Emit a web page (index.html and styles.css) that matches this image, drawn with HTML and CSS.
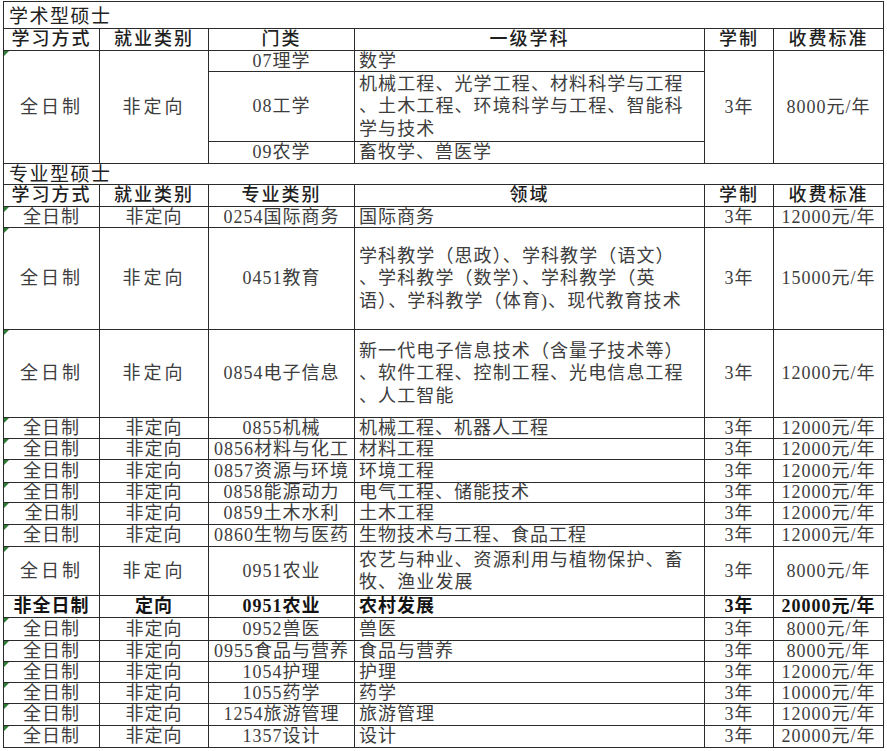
FILE: index.html
```html
<!DOCTYPE html>
<html lang="zh-CN">
<head>
<meta charset="utf-8">
<title>收费标准</title>
<link rel="stylesheet" href="styles.css">
</head>
<body>
<div class="sheet">
<table class="fee">
<colgroup><col class="c1"><col class="c2"><col class="c3"><col class="c4"><col class="c5"><col class="c6"></colgroup>
<tr class="h27"><td colspan="6" class="title">学术型硕士</td></tr>
<tr class="h22 head"><td>学习方式</td><td>就业类别</td><td>门类</td><td>一级学科</td><td>学制</td><td>收费标准</td></tr>
<tr class="h21"><td rowspan="3" class="mark sp">全日制</td><td rowspan="3" class="sp">非定向</td><td>07理学</td><td class="l">数学</td><td rowspan="3">3年</td><td rowspan="3">8000元/年</td></tr>
<tr class="h70"><td>08工学</td><td class="l multi">机械工程、光学工程、材料科学与工程<br>、土木工程、环境科学与工程、智能科<br>学与技术</td></tr>
<tr class="h22"><td>09农学</td><td class="l">畜牧学、兽医学</td></tr>
<tr class="h21"><td colspan="6" class="title t2">专业型硕士</td></tr>
<tr class="h22 head"><td>学习方式</td><td>就业类别</td><td>专业类别</td><td>领域</td><td>学制</td><td>收费标准</td></tr>
<tr class="h21"><td class="mark">全日制</td><td>非定向</td><td>0254国际商务</td><td class="l">国际商务</td><td>3年</td><td>12000元/年</td></tr>
<tr class="h102"><td class="mark sp">全日制</td><td class="sp">非定向</td><td>0451教育</td><td class="l multi">学科教学（思政）、学科教学（语文）<br>、学科教学（数学）、学科教学（英<br>语）、学科教学（体育)、现代教育技术</td><td>3年</td><td>15000元/年</td></tr>
<tr class="h88"><td class="mark sp">全日制</td><td class="sp">非定向</td><td>0854电子信息</td><td class="l multi">新一代电子信息技术（含量子技术等）<br>、软件工程、控制工程、光电信息工程<br>、人工智能</td><td>3年</td><td>12000元/年</td></tr>
<tr class="h21"><td class="mark">全日制</td><td>非定向</td><td>0855机械</td><td class="l">机械工程、机器人工程</td><td>3年</td><td>12000元/年</td></tr>
<tr class="h21"><td class="mark">全日制</td><td>非定向</td><td>0856材料与化工</td><td class="l">材料工程</td><td>3年</td><td>12000元/年</td></tr>
<tr class="h23"><td class="mark">全日制</td><td>非定向</td><td>0857资源与环境</td><td class="l">环境工程</td><td>3年</td><td>12000元/年</td></tr>
<tr class="h20"><td class="mark">全日制</td><td>非定向</td><td>0858能源动力</td><td class="l">电气工程、储能技术</td><td>3年</td><td>12000元/年</td></tr>
<tr class="h22"><td class="mark tight">全日制</td><td>非定向</td><td>0859土木水利</td><td class="l">土木工程</td><td>3年</td><td>12000元/年</td></tr>
<tr class="h22"><td class="mark">全日制</td><td>非定向</td><td>0860生物与医药</td><td class="l">生物技术与工程、食品工程</td><td>3年</td><td>12000元/年</td></tr>
<tr class="h49"><td class="mark sp">全日制</td><td class="sp">非定向</td><td>0951农业</td><td class="l multi">农艺与种业、资源利用与植物保护、畜<br>牧、渔业发展</td><td>3年</td><td>8000元/年</td></tr>
<tr class="h22 bold"><td>非全日制</td><td>定向</td><td>0951农业</td><td class="l">农村发展</td><td>3年</td><td>20000元/年</td></tr>
<tr class="h23"><td class="mark">全日制</td><td>非定向</td><td>0952兽医</td><td class="l">兽医</td><td>3年</td><td>8000元/年</td></tr>
<tr class="h21"><td class="mark">全日制</td><td>非定向</td><td>0955食品与营养</td><td class="l">食品与营养</td><td>3年</td><td>8000元/年</td></tr>
<tr class="h21"><td class="mark">全日制</td><td>非定向</td><td>1054护理</td><td class="l">护理</td><td>3年</td><td>12000元/年</td></tr>
<tr class="h21"><td class="mark">全日制</td><td>非定向</td><td>1055药学</td><td class="l">药学</td><td>3年</td><td>10000元/年</td></tr>
<tr class="h22"><td class="mark">全日制</td><td>非定向</td><td>1254旅游管理</td><td class="l">旅游管理</td><td>3年</td><td>12000元/年</td></tr>
<tr class="h22"><td class="mark">全日制</td><td>非定向</td><td>1357设计</td><td class="l">设计</td><td>3年</td><td>20000元/年</td></tr>
</table>
</div>
</body>
</html>
```
FILE: styles.css
```css
body {
  margin: 0;
  background: #ffffff;
}

.sheet {
  padding: 1px 0 0 3px;
}

table.fee {
  border-collapse: collapse;
  table-layout: fixed;
  width: 881px;
  font-family: "Liberation Serif", "Noto Sans CJK SC", serif;
  font-size: 18px;
  color: #3d3d3d;
  letter-spacing: 1px;
}

.fee .c1 { width: 96px; }
.fee .c2 { width: 109px; }
.fee .c3 { width: 146px; }
.fee .c4 { width: 350px; }
.fee .c5 { width: 69px; }
.fee .c6 { width: 110px; }

.fee td {
  border: 1px solid #2b2b2b;
  padding: 0 1px;
  text-align: center;
  vertical-align: middle;
  line-height: 19px;
  white-space: nowrap;
  overflow: hidden;
  position: relative;
}

.fee td.l {
  text-align: left;
  padding-left: 4px;
}

.fee td.multi {
  line-height: 22.5px;
  letter-spacing: 1.1px;
}

.fee td.sp {
  letter-spacing: 3px;
}

.fee td.tight {
  letter-spacing: 0;
}

.fee td.title {
  text-align: left;
  padding-left: 5px;
  font-size: 19px;
  letter-spacing: 1.5px;
  color: #222222;
  vertical-align: bottom;
  line-height: 22px;
}

.fee td.t2 {
  line-height: 19px;
}

.fee tr.head td {
  color: #1f1f1f;
  letter-spacing: 2px;
  font-weight: 500;
}

.fee tr.bold td {
  font-weight: bold;
  color: #141414;
}

.fee td.mark::before {
  content: "";
  position: absolute;
  top: 0;
  left: 0;
  border-top: 5px solid #2f7d32;
  border-right: 5px solid transparent;
}

.fee tr.h20 { height: 20px; }
.fee tr.h21 { height: 21px; }
.fee tr.h22 { height: 22px; }
.fee tr.h23 { height: 23px; }
.fee tr.h27 { height: 27px; }
.fee tr.h49 { height: 49px; }
.fee tr.h70 { height: 70px; }
.fee tr.h88 { height: 88px; }
.fee tr.h102 { height: 102px; }
```
